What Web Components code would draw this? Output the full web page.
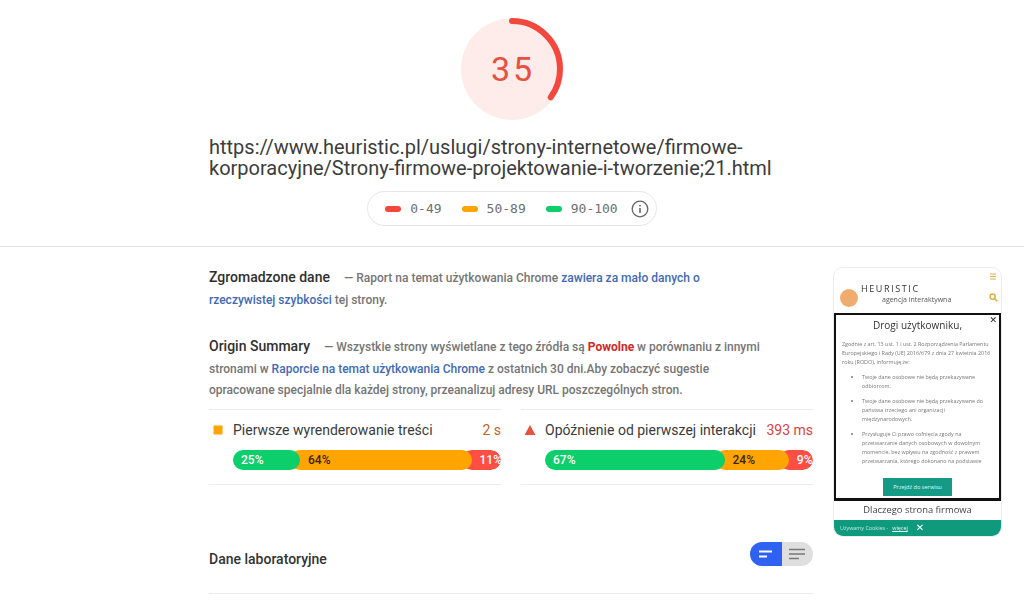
<!DOCTYPE html>
<html lang="pl">
<head>
<meta charset="utf-8">
<title>PageSpeed Insights</title>
<style>
  html, body { margin: 0; background: #fff; }
  body { font-family: Roboto, "Liberation Sans", sans-serif; height: 602px; overflow: hidden; }
</style>
</head>
<body>
<psi-header url="https://www.heuristic.pl/uslugi/strony-internetowe/firmowe-korporacyjne/Strony-firmowe-projektowanie-i-tworzenie;21.html" score="35"></psi-header>
<psi-report>
  <psi-note title-text="Zgromadzone dane" gap="11">Raport na temat użytkowania Chrome <a>zawiera za mało danych o rzeczywistej szybkości</a> tej strony.</psi-note>
  <psi-note title-text="Origin Summary" gap="11" style="margin-top:25px">Wszystkie strony wyświetlane z tego źródła są <b>Powolne</b> w porównaniu z innymi stronami w <a>Raporcie na temat użytkowania Chrome</a> z ostatnich 30 dni.Aby zobaczyć sugestie opracowane specjalnie dla każdej strony, przeanalizuj adresy URL poszczególnych stron.</psi-note>
  <psi-metrics>
    <psi-metric label="Pierwsze wyrenderowanie treści" value="2 s" level="average" fast="25" mid="64" slow="11"></psi-metric>
    <psi-metric label="Opóźnienie od pierwszej interakcji" value="393 ms" level="slow" fast="67" mid="24" slow="9"></psi-metric>
  </psi-metrics>
  <psi-lab-head>Dane laboratoryjne</psi-lab-head>
  <psi-thumb slot="side"></psi-thumb>
</psi-report>

<script>
class PsiHeader extends HTMLElement {
  connectedCallback() {
    const score = Number(this.getAttribute('score'));
    const r = 48, len = 2 * Math.PI * r;
    this.attachShadow({ mode: 'open' });
    this.shadowRoot.innerHTML = `
      <style>
        :host { display: block; height: 246px; border-bottom: 1px solid #e4e4e4; box-sizing: content-box; padding-top: 0; }
        .wrap { display: flex; flex-direction: column; align-items: center; padding-top: 18px; }
        .gauge { position: relative; width: 102px; height: 102px; margin-left: 0; }
        svg { display: block; }
        .score { position: absolute; inset: 0; display: flex; align-items: center; justify-content: center;
          font: 400 34px Roboto, sans-serif; letter-spacing: 3px; color: #e8503f; padding-left: 2px; }
        .url { width: 606px; margin-top: 17px; font: 400 20px/21px Roboto, sans-serif; color: #3c3c3c; overflow-wrap: anywhere; }
        .legend { display: flex; align-items: center; height: 33px; margin-top: 12px; padding: 0 7px 0 17px;
          border: 1px solid #e6e6e6; border-radius: 18px; font: 400 13px "DejaVu Sans Mono", "Liberation Mono", monospace; color: #6f6f6f; }
        .item { display: flex; align-items: center; gap: 9px; margin-right: 20px; }
        .item:nth-child(3) { margin-right: 13px; }
        .dash { width: 16px; height: 6px; border-radius: 3px; }
      </style>
      <div class="wrap">
        <div class="gauge">
          <svg width="102" height="102" viewBox="0 0 102 102">
            <circle cx="51" cy="51" r="51" fill="#fdecea"/>
            <circle cx="51" cy="51" r="${r}" fill="none" stroke="#f4473d" stroke-width="6" stroke-linecap="round"
              stroke-dasharray="${len * score / 100} ${len}" transform="rotate(-90 51 51)"/>
          </svg>
          <div class="score">${score}</div>
        </div>
        <div class="url">${this.getAttribute('url')}</div>
        <div class="legend">
          <span class="item"><span class="dash" style="background:#f4473d"></span>0-49</span>
          <span class="item"><span class="dash" style="background:#ffa400"></span>50-89</span>
          <span class="item"><span class="dash" style="background:#0cce6b"></span>90-100</span>
          <svg width="18" height="18" viewBox="0 0 18 18" fill="none" stroke="#666">
            <circle cx="9" cy="9" r="7.8" stroke-width="1.3"/>
            <path d="M9 8v5M9 5v1.6" stroke-width="1.6"/>
          </svg>
        </div>
      </div>`;
  }
}

class PsiReport extends HTMLElement {
  connectedCallback() {
    this.attachShadow({ mode: 'open' });
    this.shadowRoot.innerHTML = `
      <style>
        :host { display: grid; grid-template-columns: 604px 169px; column-gap: 20px; padding: 20px 0 0 209px; }
        .main { display: flex; flex-direction: column; }
      </style>
      <div class="main"><slot></slot></div>
      <div><slot name="side"></slot></div>`;
  }
}

class PsiNote extends HTMLElement {
  connectedCallback() {
    this.attachShadow({ mode: 'open' });
    this.shadowRoot.innerHTML = `
      <style>
        :host { display: block; width: 560px; font: 500 12px/21.5px Roboto, sans-serif; color: #757575; }
        .t { font-size: 14px; font-weight: 500; color: #2f2f2f; margin-right: ${this.getAttribute('gap')}px; }
        ::slotted(a) { color: #3f6ab5; }
        ::slotted(b) { color: #d3281f; font-weight: 700; }
      </style>
      <span class="t">${this.getAttribute('title-text')}</span> — <slot></slot>`;
  }
}

class PsiMetrics extends HTMLElement {
  connectedCallback() {
    this.attachShadow({ mode: 'open' });
    this.shadowRoot.innerHTML = `
      <style>
        :host { display: grid; grid-template-columns: 292px 292px; column-gap: 20px; margin-top: 7px; }
      </style>
      <slot></slot>`;
  }
}

class PsiMetric extends HTMLElement {
  connectedCallback() {
    const a = n => this.getAttribute(n);
    const slow = a('level') === 'slow';
    const icon = slow
      ? '<svg width="12" height="12" viewBox="0 0 12 12"><path d="M6 1l5.4 10H.6z" fill="#e8503f"/></svg>'
      : '<svg width="12" height="12" viewBox="0 0 12 12"><rect x="1.5" y="1.5" width="9" height="9" fill="#ffa400"/></svg>';
    this.attachShadow({ mode: 'open' });
    this.shadowRoot.innerHTML = `
      <style>
        :host { display: block; height: 74px; border-top: 1px solid #ececec; border-bottom: 1px solid #ececec; }
        .row { display: flex; align-items: center; height: 40px; padding-right: 0; font: 400 14px Roboto, sans-serif; color: #3a3a3a; }
        .ic { width: 24px; flex: none; padding-left: 3px; box-sizing: border-box; display: flex; }
        .lab { flex: 1; }
        .val { color: ${slow ? '#d8423a' : '#c0622b'}; }
        .bar { display: flex; height: 20px; margin-left: 24px; border-radius: 10px; overflow: hidden;
          font: 500 12px/20px Roboto, sans-serif; }
        .seg { box-sizing: border-box; padding-left: 8px; margin-left: -10px; padding-left: 18px; border-radius: 0 10px 10px 0; position: relative; }
        .seg.f { background: #0cce6b; color: #fff; margin-left: 0; padding-left: 8px; z-index: 3; }
        .seg.m { background: #ffa400; color: #3a2500; z-index: 2; }
        .seg.s { background: #ff4e42; color: #fff; z-index: 1; border-radius: 10px; }
        .seg.m { border-radius: 10px; }
      </style>
      <div class="row"><span class="ic">${icon}</span><span class="lab">${a('label')}</span><span class="val">${a('value')}</span></div>
      <div class="bar">
        <div class="seg f" style="width:${a('fast')}%">${a('fast')}%</div>
        <div class="seg m" style="width:calc(${a('mid')}% + 10px)">${a('mid')}%</div>
        <div class="seg s" style="width:calc(${a('slow')}% + 10px)">${a('slow')}%</div>
      </div>`;
  }
}

class PsiLabHead extends HTMLElement {
  connectedCallback() {
    this.attachShadow({ mode: 'open' });
    this.shadowRoot.innerHTML = `
      <style>
        :host { display: flex; align-items: center; justify-content: space-between; height: 109px; margin-top: 0;
          padding-top: 0; box-sizing: border-box; border-bottom: 1px solid #ececec; }
        .t { font: 500 14px Roboto, sans-serif; color: #333; margin-top: 40px; }
        .tg { display: flex; width: 63px; height: 24px; border-radius: 12px; overflow: hidden; margin-top: 30px; }
        .tg div { flex: 1; display: flex; align-items: center; justify-content: center; }
        .on { background: #2f62f2; }
        .off { background: #dfdfdf; }
      </style>
      <span class="t"><slot></slot></span>
      <div class="tg">
        <div class="on"><svg width="16" height="10" viewBox="0 0 16 10" stroke="#fff" stroke-width="2"><path d="M1 2.5h13M1 7.5h8"/></svg></div>
        <div class="off"><svg width="16" height="12" viewBox="0 0 16 12" stroke="#777" stroke-width="1.6"><path d="M0 1.5h16M0 6h16M0 10.5h10"/></svg></div>
      </div>`;
  }
}

class PsiThumb extends HTMLElement {
  connectedCallback() {
    this.attachShadow({ mode: 'open' });
    this.shadowRoot.innerHTML = `
      <style>
        :host { display: flex; flex-direction: column; width: 169px; height: 270px; box-sizing: border-box;
          border: 1px solid #ececec; border-radius: 10px; overflow: hidden; background: #fff;
          font-family: "Open Sans", sans-serif; color: #666; filter: blur(.35px); }
        .top { position: relative; height: 45px; flex: none; }
        .blob { position: absolute; left: 6px; top: 21px; width: 18px; height: 18px; border-radius: 50%; background: #f0ab6e; }
        .logo { position: absolute; left: 27px; top: 16px; font: 400 9px/10px "Open Sans", sans-serif; letter-spacing: 1.6px; color: #333; }
        .tag { position: absolute; left: 48px; top: 26px; font-size: 7px; line-height: 12px; color: #555; }
        .burger { position: absolute; right: 5px; top: 5px; }
        .lens { position: absolute; right: 3px; top: 25px; }
        .modal { position: relative; flex: none; height: 188px; box-sizing: border-box; border: 2px solid #111; border-bottom-width: 3px;
          display: flex; flex-direction: column; align-items: stretch; }
        h4 { margin: 0; padding-top: 2px; text-align: center; font: 400 10px/16px "Open Sans", sans-serif; color: #333; }
        .close { position: absolute; right: 2px; top: 0; font: 700 9px/10px "DejaVu Sans", sans-serif; color: #222; }
        .scroll { height: 138px; overflow: hidden; padding: 7px 6px 0; font-size: 5.4px; line-height: 9px; color: #777; }
        p { margin: 0 0 6px; }
        ul { margin: 0; padding: 0 0 0 20px; }
        li { margin-bottom: 6px; }
        .btn { align-self: center; width: 69px; height: 18px; background: #159b85; color: #dff; font-size: 5.6px; line-height: 18px; text-align: center; margin-top: 0; }
        .why { flex: none; height: 19px; text-align: center; font: 400 9.4px/18px "Open Sans", sans-serif; color: #444; }
        .foot { flex: 1; display: flex; align-items: center; gap: 4px; background: #0f9a7e; padding-left: 6px; color: #bfe8df; font-size: 5.4px; }
        .foot u { color: #e8f8f4; }
        .foot b { color: #fff; font: 700 10px/10px "DejaVu Sans", sans-serif; margin-left: 4px; }
      </style>
      <div class="top">
        <div class="blob"></div>
        <div class="logo">HEURISTIC</div>
        <div class="tag">agencja interaktywna</div>
        <svg class="burger" width="6" height="7" viewBox="0 0 6 7" stroke="#d8b04c"><path d="M0 1h6M0 3.5h6M0 6h6"/></svg>
        <svg class="lens" width="9" height="9" viewBox="0 0 9 9" fill="none" stroke="#e0b040" stroke-width="1.5"><circle cx="3.6" cy="3.6" r="2.6"/><path d="M5.5 5.5L8.4 8.4"/></svg>
      </div>
      <div class="modal">
        <h4>Drogi użytkowniku,</h4>
        <div class="close">✕</div>
        <div class="scroll">
          <p>Zgodnie z art. 13 ust. 1 i ust. 2 Rozporządzenia Parlamentu Europejskiego i Rady (UE) 2016/679 z dnia 27 kwietnia 2016 roku (RODO), informuję że:</p>
          <ul>
            <li>Twoje dane osobowe nie będą przekazywane odbiorcom.</li>
            <li>Twoje dane osobowe nie będą przekazywane do państwa trzeciego ani organizacji międzynarodowych.</li>
            <li>Przysługuje Ci prawo cofnięcia zgody na przetwarzanie danych osobowych w dowolnym momencie, bez wpływu na zgodność z prawem przetwarzania, którego dokonano na podstawie</li>
          </ul>
        </div>
        <div class="btn">Przejdź do serwisu</div>
      </div>
      <div class="why">Dlaczego strona firmowa</div>
      <div class="foot">Używamy Cookies - <u>więcej</u><b>✕</b></div>`;
  }
}

customElements.define('psi-header', PsiHeader);
customElements.define('psi-report', PsiReport);
customElements.define('psi-note', PsiNote);
customElements.define('psi-metrics', PsiMetrics);
customElements.define('psi-metric', PsiMetric);
customElements.define('psi-lab-head', PsiLabHead);
customElements.define('psi-thumb', PsiThumb);
</script>
</body>
</html>
